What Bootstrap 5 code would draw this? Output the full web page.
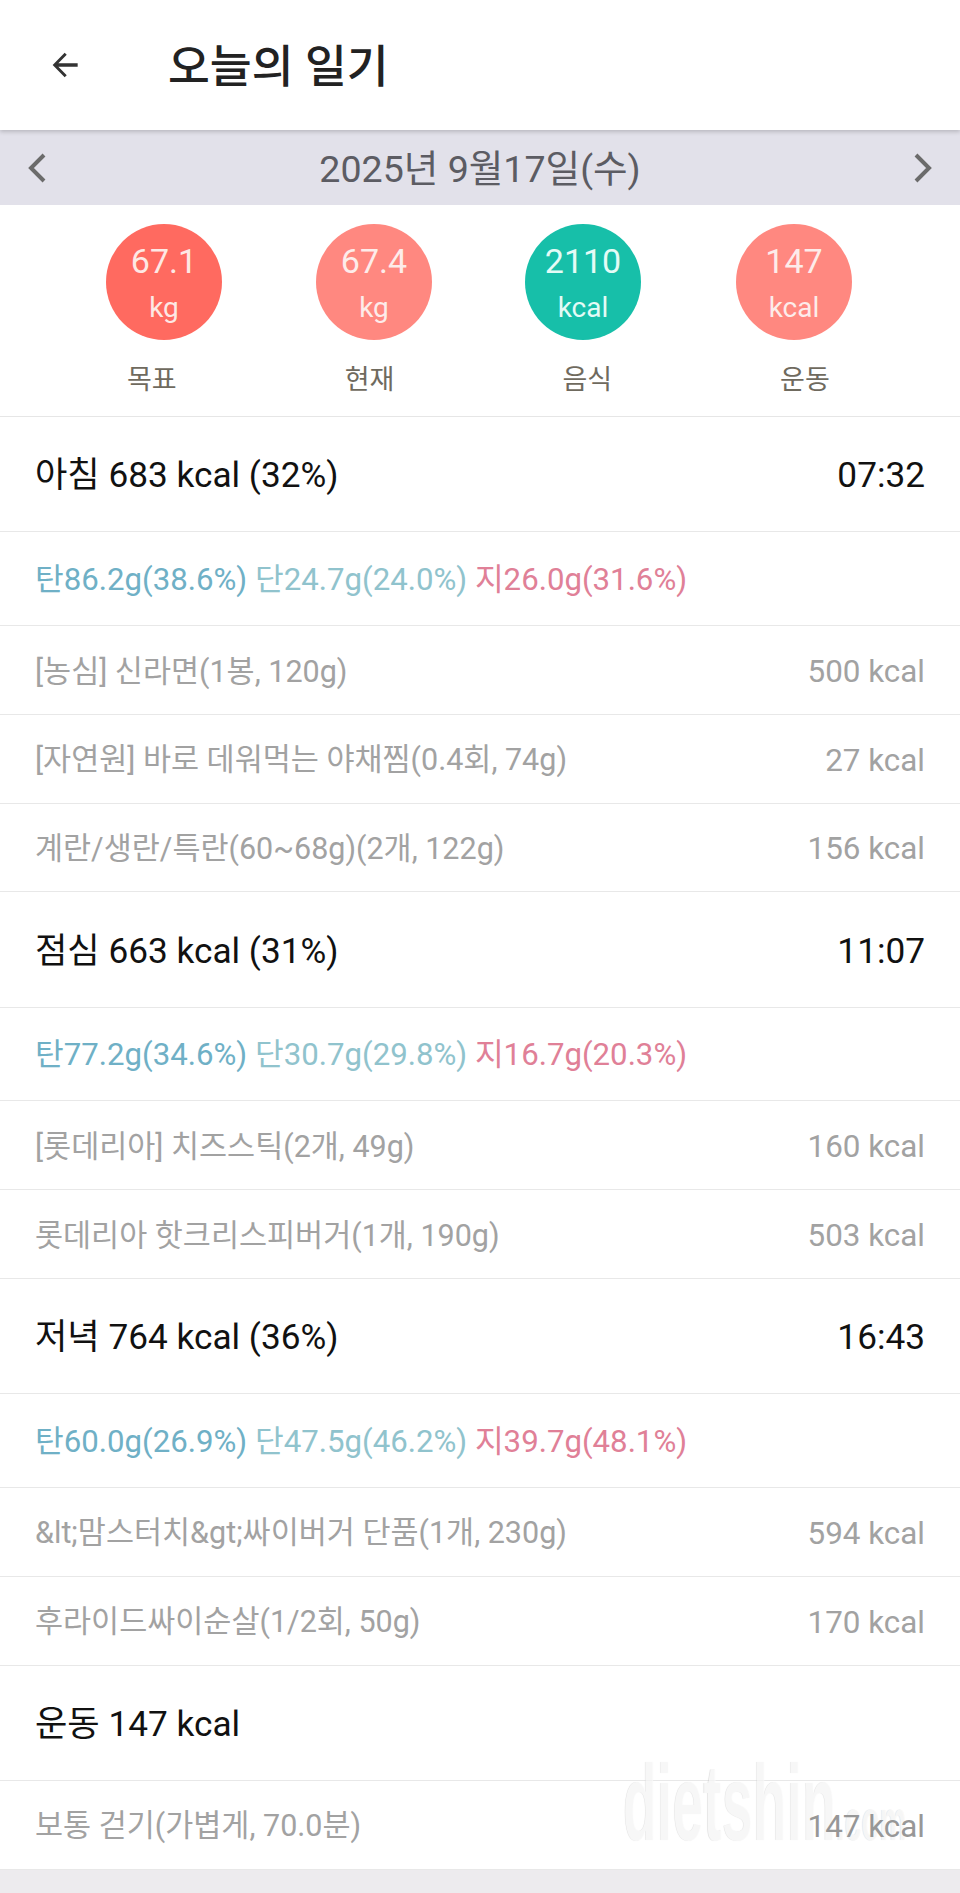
<!DOCTYPE html>
<html lang="ko">
<head>
    <meta charset="UTF-8">
    <meta name="viewport" content="width=device-width, initial-scale=1.0">
    <title>오늘의 일기</title>
    <link href="https://cdn.jsdelivr.net/npm/bootstrap@5.3.3/dist/css/bootstrap.min.css" rel="stylesheet">
    <style>
        body {
            font-family: Roboto, "Noto Sans CJK KR", sans-serif;
            background: #edebee;
            margin: 0;
        }
        .page-wrap {
            position: relative;
            height: 1893px;
            overflow: hidden;
        }
        .top-bar {
            height: 130px;
            background: #fff;
            padding-left: 46px;
            position: relative;
            z-index: 1;
            box-shadow: 0 2px 4px rgba(0, 0, 0, 0.18);
        }
        .top-title {
            margin: 7px 0 0 84px;
            font-size: 45.5px;
            font-weight: 500;
            color: #222;
        }
        .date-bar {
            height: 75px;
            background: #e2e1ea;
            padding: 0 27px;
            color: #5c5c63;
            font-size: 37.6px;
        }
        .date-bar span { padding-top: 4px; }
        .summary {
            background: #fff;
            height: 212px;
            padding-top: 19px;
            border-bottom: 1px solid #e6e6e6;
        }
        .circle-row {
            padding: 0 61px 0 59px;
        }
        .circle-col {
            width: 210px;
        }
        .dot {
            width: 116px;
            height: 116px;
            border-radius: 50%;
            color: #fff;
            line-height: 1;
            padding-top: 20px;
        }
        .dot-val { font-size: 34px; }
        .dot-unit { font-size: 28px; margin-top: 16px; }
        .dot-goal { background: #ff6a60; color: #fde8e4; }
        .dot-now { background: #ff8880; color: #fdecea; }
        .dot-food { background: #17bfa9; color: #e4fbf6; margin-left: -2px; }
        .label-row {
            padding: 20px 46px 0 43px;
            color: #6f6a5e;
            font-size: 27px;
        }
        .label-col {
            width: 217.7px;
        }
        .diary-row {
            background: #fff;
            border-bottom: 1px solid #e8e8e8;
            padding: 0 35px;
        }
        .meal-row {
            height: 115.4px;
            font-size: 35.2px;
            color: #111;
            padding-top: 3px;
        }
        .macro-row {
            height: 93.6px;
            font-size: 31.2px;
            padding-top: 3px;
        }
        .food-row {
            height: 88.8px;
            font-size: 30.5px;
            color: #a2a2a2;
            padding-top: 3px;
        }
        .food-kcal { font-size: 31.4px; }
        .over-mark {
            position: relative;
            z-index: 1;
            color: #979797;
        }
        .carb { color: #6fb0c6; }
        .prot { color: #90c3cd; }
        .fat { color: #e08097; }
        .watermark {
            position: absolute;
            left: 623px;
            top: 1750px;
            font-family: "Liberation Sans", sans-serif;
            font-size: 107px;
            font-weight: 700;
            line-height: 1;
            color: rgba(255, 255, 255, 0.72);
            text-shadow: -1px 0 1px rgba(0, 0, 0, 0.12);
            transform: scaleX(0.52);
            transform-origin: left top;
            white-space: nowrap;
        }
        .watermark span { font-size: 58px; }
    </style>
</head>
<body>
<div class="page-wrap">

    <div class="top-bar d-flex align-items-center">
        <svg width="38" height="38" viewBox="0 0 24 24" fill="#333"><path d="M20 10.9H7.8l5.3-5.4L11.8 4.2 4.2 12l7.6 7.8 1.3-1.3-5.3-5.4H20z"/></svg>
        <h1 class="top-title">오늘의 일기</h1>
    </div>

    <div class="date-bar d-flex align-items-center justify-content-between">
        <svg width="20" height="30" viewBox="0 0 20 30" fill="none" stroke="#6b6b6b" stroke-width="4"><path d="M17 2 4 15l13 13"/></svg>
        <span>2025년 9월17일(수)</span>
        <svg width="20" height="30" viewBox="0 0 20 30" fill="none" stroke="#6b6b6b" stroke-width="4"><path d="M3 2l13 13L3 28"/></svg>
    </div>

    <div class="summary">
        <div class="circle-row d-flex">
            <div class="circle-col d-flex justify-content-center"><div class="dot dot-goal text-center"><div class="dot-val">67.1</div><div class="dot-unit">kg</div></div></div>
            <div class="circle-col d-flex justify-content-center"><div class="dot dot-now text-center"><div class="dot-val">67.4</div><div class="dot-unit">kg</div></div></div>
            <div class="circle-col d-flex justify-content-center"><div class="dot dot-food text-center"><div class="dot-val">2110</div><div class="dot-unit">kcal</div></div></div>
            <div class="circle-col d-flex justify-content-center"><div class="dot dot-now text-center"><div class="dot-val">147</div><div class="dot-unit">kcal</div></div></div>
        </div>
        <div class="label-row d-flex">
            <div class="label-col text-center">목표</div>
            <div class="label-col text-center">현재</div>
            <div class="label-col text-center">음식</div>
            <div class="label-col text-center">운동</div>
        </div>
    </div>

    <div class="diary-row meal-row d-flex align-items-center justify-content-between"><span>아침 683 kcal (32%)</span><span>07:32</span></div>
    <div class="diary-row macro-row d-flex align-items-center"><span class="carb">탄86.2g(38.6%)</span>&nbsp;<span class="prot">단24.7g(24.0%)</span>&nbsp;<span class="fat">지26.0g(31.6%)</span></div>
    <div class="diary-row food-row d-flex align-items-center justify-content-between"><span>[농심] 신라면(1봉, 120g)</span><span class="food-kcal">500 kcal</span></div>
    <div class="diary-row food-row d-flex align-items-center justify-content-between"><span>[자연원] 바로 데워먹는 야채찜(0.4회, 74g)</span><span class="food-kcal">27 kcal</span></div>
    <div class="diary-row food-row d-flex align-items-center justify-content-between"><span>계란/생란/특란(60~68g)(2개, 122g)</span><span class="food-kcal">156 kcal</span></div>

    <div class="diary-row meal-row d-flex align-items-center justify-content-between"><span>점심 663 kcal (31%)</span><span>11:07</span></div>
    <div class="diary-row macro-row d-flex align-items-center"><span class="carb">탄77.2g(34.6%)</span>&nbsp;<span class="prot">단30.7g(29.8%)</span>&nbsp;<span class="fat">지16.7g(20.3%)</span></div>
    <div class="diary-row food-row d-flex align-items-center justify-content-between"><span>[롯데리아] 치즈스틱(2개, 49g)</span><span class="food-kcal">160 kcal</span></div>
    <div class="diary-row food-row d-flex align-items-center justify-content-between"><span>롯데리아 핫크리스피버거(1개, 190g)</span><span class="food-kcal">503 kcal</span></div>

    <div class="diary-row meal-row d-flex align-items-center justify-content-between"><span>저녁 764 kcal (36%)</span><span>16:43</span></div>
    <div class="diary-row macro-row d-flex align-items-center"><span class="carb">탄60.0g(26.9%)</span>&nbsp;<span class="prot">단47.5g(46.2%)</span>&nbsp;<span class="fat">지39.7g(48.1%)</span></div>
    <div class="diary-row food-row d-flex align-items-center justify-content-between"><span>&amp;lt;맘스터치&amp;gt;싸이버거 단품(1개, 230g)</span><span class="food-kcal">594 kcal</span></div>
    <div class="diary-row food-row d-flex align-items-center justify-content-between"><span>후라이드싸이순살(1/2회, 50g)</span><span class="food-kcal">170 kcal</span></div>

    <div class="diary-row meal-row d-flex align-items-center justify-content-between"><span>운동 147 kcal</span></div>
    <div class="diary-row food-row d-flex align-items-center justify-content-between"><span>보통 걷기(가볍게, 70.0분)</span><span class="food-kcal over-mark">147 kcal</span></div>

    <div class="watermark">dietshin<span>.com</span></div>
</div>
<script src="https://cdn.jsdelivr.net/npm/bootstrap@5.3.3/dist/js/bootstrap.bundle.min.js"></script>
</body>
</html>
